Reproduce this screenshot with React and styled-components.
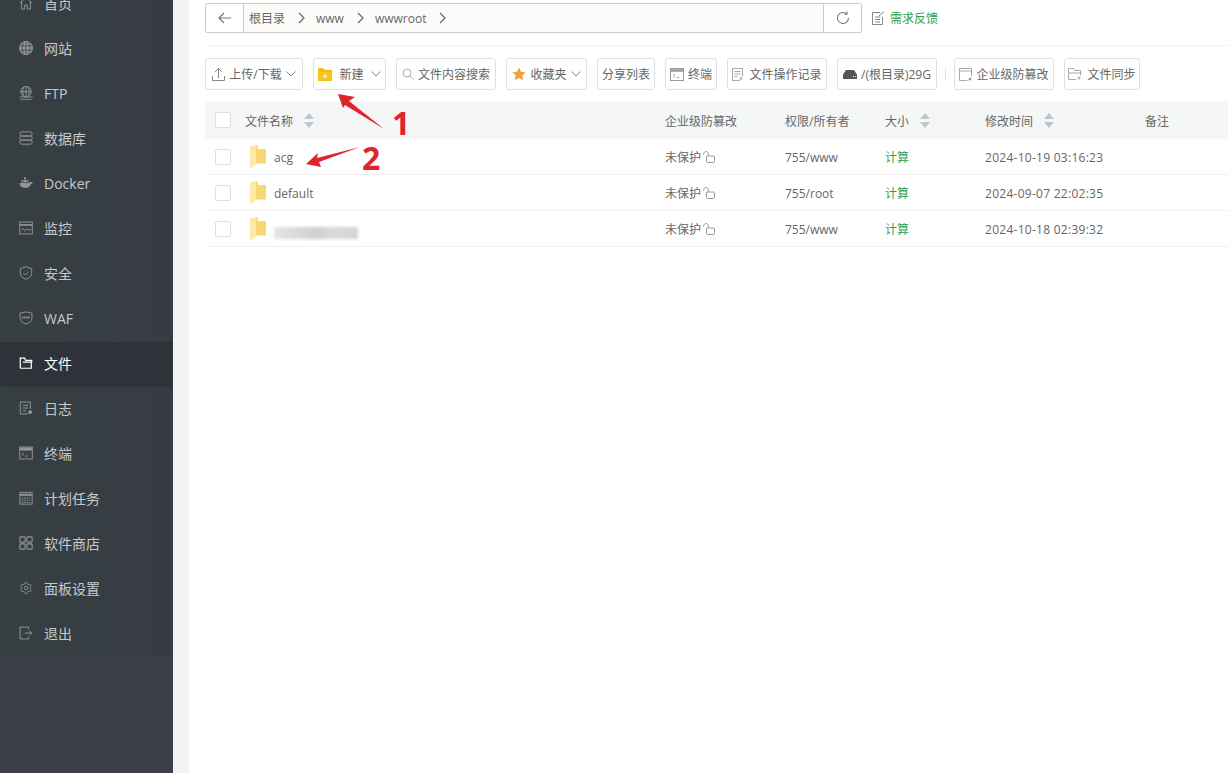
import React from "react";
import styled, { createGlobalStyle } from "styled-components";
import { Settings as GearIcon } from "lucide-react";

const Global = createGlobalStyle`
  html, body { margin: 0; height: 100%; overflow: hidden; }
  body { font-family: "Open Sans", "Noto Sans CJK SC", sans-serif; font-size: 12px; color: #666; }
`;

// layout
const Page = styled.div`
  display: flex;
  width: 1228px;
  height: 773px;
  overflow: hidden;
  background: #f1f3f5;
`;

const Sidebar = styled.nav`
  width: 173px;
  flex-shrink: 0;
  background: #3c4149;
`;

const NavList = styled.div`
  margin-top: -18px;
  background: linear-gradient(90deg, #363f42 0%, #363c43 100%);
`;

const NavItem = styled.div`
  height: 45px;
  box-sizing: border-box;
  padding: 0 0 3px 19px;
  display: flex;
  align-items: center;
  gap: 11px;
  font-size: 14px;
  color: ${(p) => (p.$active ? "#fff" : "#c6cacd")};
  background: ${(p) => (p.$active ? "#2e3339" : "transparent")};
  svg {
    width: 14px;
    height: 14px;
    flex-shrink: 0;
    color: ${(p) => (p.$active ? "#fff" : "#90969a")};
  }
`;

const Main = styled.main`
  position: relative;
  flex: 1;
  margin-left: 16px;
  padding: 3px 0 0 16px;
  background: #fff;
`;

// path bar
const TopRow = styled.div`
  display: flex;
  align-items: center;
  height: 30px;
  padding-bottom: 12px;
  border-bottom: 1px solid #f0f0f0;
`;

const PathBar = styled.div`
  width: 657px;
  height: 30px;
  display: flex;
  box-sizing: border-box;
  border: 1px solid #ccc;
  border-radius: 2px;
  background: #fbfcf9;
`;

const PathBtn = styled.div`
  width: 37px;
  flex-shrink: 0;
  display: flex;
  align-items: center;
  justify-content: center;
  background: #fff;
  color: #777;
  ${(p) => (p.$right ? "border-left: 1px solid #ccc;" : "border-right: 1px solid #ccc;")}
  svg { width: 14px; height: 14px; }
`;

const Crumbs = styled.div`
  flex: 1;
  display: flex;
  align-items: center;
  padding-left: 5px;
  color: #666;
`;

const Crumb = styled.span`
  display: flex;
  align-items: center;
  margin-right: 10px;
  svg { width: 9px; height: 12px; margin-left: 12px; color: #666; }
`;

const Feedback = styled.div`
  display: flex;
  align-items: center;
  gap: 5px;
  margin-left: 10px;
  color: #2f9e4f;
  svg { width: 13px; height: 14px; color: #888; }
`;

// toolbar
const Toolbar = styled.div`
  display: flex;
  align-items: center;
  gap: 10px;
  margin-top: 12px;
`;

const ToolBtn = styled.div`
  width: ${(p) => p.$w}px;
  height: 32px;
  flex-shrink: 0;
  box-sizing: border-box;
  display: flex;
  align-items: center;
  justify-content: center;
  gap: ${(p) => p.$gap || 4}px;
  border: 1px solid #dcdfe6;
  border-radius: 3px;
  color: #666;
  white-space: nowrap;
  svg { flex-shrink: 0; }
`;

const ToolSep = styled.div`
  width: 1px;
  height: 12px;
  background: #ddd;
  margin: 0 -2px;
`;

// table
const Table = styled.div`
  margin-top: 12px;
`;

const Row = styled.div`
  display: grid;
  grid-template-columns: 30px 420px 120px 100px 100px 160px 1fr;
  align-items: center;
  height: ${(p) => (p.$head ? 37 : 36)}px;
  box-sizing: border-box;
  padding-left: 10px;
  background: ${(p) => (p.$head ? "#f5f6f6" : "#fff")};
  border-bottom: 1px solid ${(p) => (p.$head ? "#f5f6f6" : "#f0f0f0")};
  color: #666;
`;

const Check = styled.span`
  width: 16px;
  height: 16px;
  box-sizing: border-box;
  display: block;
  border: 1px solid #dcdfe6;
  border-radius: 2px;
  background: #fff;
`;

const HeadCell = styled.div`
  display: flex;
  align-items: center;
  gap: 11px;
  span { padding-top: 2px; }
`;

const NameCell = styled.div`
  display: flex;
  align-items: center;
  gap: 8px;
  margin-left: 5px;
`;

const Latin = styled.span`
  padding-top: 2px;
  letter-spacing: ${(p) => (p.$wide ? "0.27px" : "0")};
`;

const Blurred = styled.span`
  display: block;
  width: 84px;
  height: 12px;
  margin-top: 8px;
  background: linear-gradient(90deg, #e6e6e6, #cfcfcf 50%, #dadada 70%, #d4d4d4);
  filter: blur(1.5px);
`;

const Lock = styled.span`
  display: inline-flex;
  align-items: center;
  gap: 2px;
  svg { width: 12px; height: 12px; color: #999; }
`;

const Calc = styled.span`
  color: #2f9e4f;
`;

// annotations laid over the page
const Marks = styled.svg`
  position: absolute;
  left: 0;
  top: 0;
  width: 1039px;
  height: 200px;
  pointer-events: none;
`;

const Digit = styled.span`
  position: absolute;
  left: ${(p) => p.$x}px;
  top: ${(p) => p.$y}px;
  font-family: "Noto Sans", sans-serif;
  font-size: 32px;
  line-height: 32px;
  font-weight: 700;
  color: #e0242c;
`;

const I = ({ children, fill = "none", ...rest }) => (
  <svg viewBox="0 0 16 16" fill={fill} stroke="currentColor" strokeWidth="1.1" {...rest}>
    {children}
  </svg>
);

const navItems = [
  ["首页", <I><path d="M1 8l7-6.5L15 8M3 6.500V15h3.500v-4.500h3V15H13V6.500" /></I>],
  ["网站", <I fill="currentColor"><circle cx="8" cy="8" r="7.500" /><path stroke="#363c43" strokeWidth=".8" d="M1 5.500h14M1 10.500h14M8 1v14M5 1.500c-2 4-2 9 0 13M11 1.500c2 4 2 9 0 13" /></I>],
  ["FTP", <I><circle cx="8" cy="6.500" r="6" /><path d="M2 6.500h12M8 .5v12M5.500 1.200c-1.500 3-1.500 7 0 10M10.500 1.200c1.500 3 1.500 7 0 10M.5 12.500h15M1.500 15.200h13" /></I>],
  ["数据库", <I><rect x="1" y="1" width="14" height="4.600" rx="2" /><rect x="1" y="5.800" width="14" height="4.600" rx="2" /><rect x="1" y="10.500" width="14" height="4.600" rx="2" /></I>],
  ["Docker", <I fill="currentColor" stroke="none"><path d="M.5 8h11c.5-1 1.500-1.500 2.500-1.200.800.200 1.500.600 2 1.200-.800.800-1.500 1-2.300 1-1 3-3.500 4.500-6.700 4.500-3.500 0-6-1.500-6.500-5.500z" /><path d="M3 4.500h2.200v3H3zM5.700 4.500h2.200v3H5.700zM8.400 4.500h2.200v3H8.400zM5.700 1.500h2.200v2.600H5.700z" /></I>],
  ["监控", <I><rect x=".8" y="1.200" width="14.400" height="13.600" /><path d="M.8 4.500h14.400" strokeWidth="2" /><path d="M2.500 10.500l2.500-2 2 3 2.500-3 1.500 2 3-1" /></I>],
  ["安全", <I><path d="M8 .8l6.500 2.200v5.500c0 3-2.800 5.200-6.500 6.700-3.700-1.500-6.500-3.700-6.500-6.700V3z" /><path d="M5 8l2.200 2.200L11 6.500" /></I>],
  ["WAF", <I><path d="M8 1l6.800 1.500v6c0 3-3 5-6.800 6.500-3.800-1.500-6.800-3.500-6.800-6.500v-6z" /><path strokeWidth="2.200" strokeDasharray="1.500 .6" d="M3.500 7.500h9" /></I>],
  ["文件", <I strokeWidth="1.400"><path d="M1.500 14V2.500h5l1 2.500h7v2M1.500 14h12.500V7H4.500" /></I>],
  ["日志", <I><path d="M13 9V1.200H1.500v13.600H10" /><path d="M4.500 5h6M4.500 8h6M4.500 11h3.500" /><circle cx="12.800" cy="12.800" r="1.700" fill="currentColor" /></I>],
  ["终端", <I><rect x=".8" y="1.200" width="14.400" height="13.600" /><path d="M.8 3.500h14.400" strokeWidth="3.500" /><path d="M3.500 8l2 1.500-2 1.500M7 11.500h3.500" /></I>],
  ["计划任务", <I><rect x="1" y="2" width="14" height="13" /><path d="M1 4.500h14" strokeWidth="2" /><path d="M4 .5v2M8 .5v2M12 .5v2M3 8h10M3 10.500h10M3 13h10" strokeDasharray="2 1" /></I>],
  ["软件商店", <I strokeWidth="1.300"><rect x="1" y="1" width="6" height="6" rx="1" /><rect x="9" y="1" width="6" height="6" rx="1" /><rect x="1" y="9" width="6" height="6" rx="1" /><rect x="9" y="9" width="6" height="6" rx="1" /></I>],
  ["面板设置", <GearIcon strokeWidth={1.4} />],
  ["退出", <I><path d="M11 4V1.200H1.200v13.600H11V12" /><path d="M6.500 8h8M12 5.500L14.500 8 12 10.500" /></I>],
];

const Chevron = () => (
  <svg width="10" height="6" viewBox="0 0 10 6" fill="none" stroke="#888" strokeWidth="1">
    <path d="M.5.500L5 5l4.500-4.500" />
  </svg>
);

const CrumbArrow = () => (
  <svg viewBox="0 0 9 12" fill="none" stroke="currentColor" strokeWidth="1.200">
    <path d="M2 1l5 5-5 5" />
  </svg>
);

const SortIcon = () => (
  <svg width="10" height="15" viewBox="0 0 10 15" fill="#c0c4cc">
    <path d="M5 0l5 6H0zM5 15L0 9h10z" />
  </svg>
);

const FolderIcon = () => (
  <svg width="16" height="23" viewBox="0 0 16 23">
    <path d="M0 1.500L6 0v19l-5 4-1-1z" fill="#fdeaa8" />
    <path d="M6 4h10v14.500H6z" fill="#f8d775" />
    <path d="M6 0h1.500v4H6z" fill="#f8d775" />
  </svg>
);

const OpenLock = () => (
  <svg viewBox="0 0 12 12" fill="none" stroke="currentColor" strokeWidth="1">
    <rect x="3.500" y="5" width="8" height="6.500" rx="1" />
    <path d="M.5 3.500C.5 1.500 2 .5 3 .5c1 0 2 .6 2.300 2V5" />
  </svg>
);

const tools = [
  { label: "上传/下载", w: 98, caret: true, icon: <svg width="13" height="13" viewBox="0 0 13 13" fill="none" stroke="#888"><path d="M.5 8v4.500h12V8M6.500 10V1M3 4l3.500-3.500L10 4" /></svg> },
  { label: "新建", w: 73, gap: 7, caret: true, icon: <svg width="14" height="13" viewBox="0 0 14 13"><path d="M0 0h5.500l1.500 2h7v11H0z" fill="#f5c518" /><path d="M0 2.800h14" stroke="#d9a90f" strokeWidth=".6" /><path d="M7 6v4.500M4.800 8.200h4.400" stroke="#fff" strokeWidth="1" /></svg> },
  { label: "文件内容搜索", w: 100, icon: <svg width="12" height="12" viewBox="0 0 12 12" fill="none" stroke="#aaa"><circle cx="5" cy="5" r="4" /><path d="M8 8l3.500 3.500" /></svg> },
  { label: "收藏夹", w: 81, caret: true, icon: <svg width="14" height="14" viewBox="0 0 14 14" fill="#e8a33a"><path d="M7 .5l2 4.300 4.700.6-3.400 3.200.9 4.700L7 11l-4.200 2.300.9-4.700L.3 5.400 5 4.800z" /></svg> },
  { label: "分享列表", w: 58 },
  { label: "终端", w: 52, icon: <svg width="14" height="13" viewBox="0 0 14 13" fill="none" stroke="#999"><rect x=".5" y=".5" width="13" height="12" /><path d="M.5 2.500h13" strokeWidth="2.500" /><path d="M3 6l2 1.500L3 9M6.500 9.500h3" strokeWidth=".8" /></svg> },
  { label: "文件操作记录", w: 100, gap: 6, icon: <svg width="11" height="13" viewBox="0 0 11 13" fill="none" stroke="#aaa"><path d="M10.500 8V.5H.5v12H8M2.500 3.500h6M2.500 6h6M2.500 8.500h3" /><circle cx="9" cy="10.500" r="1.300" /></svg> },
  { label: "/(根目录)29G", w: 100, gap: 4, icon: <svg width="14" height="9" viewBox="0 0 14 9" fill="#555"><path d="M3 0h8l3 4.500V9H0V4.500z" /><path d="M10 6.500h1M12 6.500h.8" stroke="#fff" /></svg> },
];

const tools2 = [
  { label: "企业级防篡改", w: 100, icon: <svg width="13" height="13" viewBox="0 0 13 13" fill="none" stroke="#aaa"><path d="M8.500 12.500h-8V.5h12v8M.5 3h12" /><circle cx="11" cy="11" r="1.500" fill="#6cbf84" stroke="none" /></svg> },
  { label: "文件同步", w: 76, gap: 5, icon: <svg width="14" height="12" viewBox="0 0 14 12" fill="none" stroke="#aaa"><path d="M8 11.500H.5V.5h5l1 2h6v5M.5 5h13" /><circle cx="11" cy="10" r="1.500" fill="#8fd0a5" stroke="none" /></svg> },
];

const renderTool = (t) => (
  <ToolBtn key={t.label} $w={t.w} $gap={t.gap}>
    {t.icon}
    <span>{t.label}</span>
    {t.caret && <Chevron />}
  </ToolBtn>
);

const files = [
  { name: "acg", perm: "755/www", time: "2024-10-19 03:16:23" },
  { name: "default", perm: "755/root", time: "2024-09-07 22:02:35" },
  { blur: true, perm: "755/www", time: "2024-10-18 02:39:32" },
];

export default function App() {
  return (
    <>
      <Global />
      <Page>
        <Sidebar>
          <NavList>
            {navItems.map(([label, icon]) => (
              <NavItem key={label} $active={label === "文件"}>
                {icon}
                <span>{label}</span>
              </NavItem>
            ))}
          </NavList>
        </Sidebar>
        <Main>
          <TopRow>
            <PathBar>
              <PathBtn>
                <svg viewBox="0 0 14 14" fill="none" stroke="currentColor" strokeWidth="1.200"><path d="M13 7H1.500M6 2L1 7l5 5" /></svg>
              </PathBtn>
              <Crumbs>
                <Crumb>根目录<CrumbArrow /></Crumb>
                <Crumb>www<CrumbArrow /></Crumb>
                <Crumb>wwwroot<CrumbArrow /></Crumb>
              </Crumbs>
              <PathBtn $right>
                <svg viewBox="0 0 14 14" fill="none" stroke="currentColor" strokeWidth="1.100"><path d="M12.500 7a5.500 5.500 0 1 1-1.700-4M11 .5V3.200H8.300" /></svg>
              </PathBtn>
            </PathBar>
            <Feedback>
              <svg viewBox="0 0 13 14" fill="none" stroke="currentColor"><path d="M8 1.500H.5v12h10V6M3 6h5M3 8.500h5M3 11h5M7 5l5-4.500" /></svg>
              需求反馈
            </Feedback>
          </TopRow>
          <Toolbar>
            {tools.map(renderTool)}
            <ToolSep />
            {tools2.map(renderTool)}
          </Toolbar>
          <Table>
            <Row $head>
              <Check />
              <HeadCell><span>文件名称</span><SortIcon /></HeadCell>
              <HeadCell><span>企业级防篡改</span></HeadCell>
              <HeadCell><span>权限/所有者</span></HeadCell>
              <HeadCell><span>大小</span><SortIcon /></HeadCell>
              <HeadCell><span>修改时间</span><SortIcon /></HeadCell>
              <HeadCell><span>备注</span></HeadCell>
            </Row>
            {files.map((f) => (
              <Row key={f.time}>
                <Check />
                <NameCell>
                  <FolderIcon />
                  {f.blur ? <Blurred /> : <Latin>{f.name}</Latin>}
                </NameCell>
                <Lock>未保护<OpenLock /></Lock>
                <Latin>{f.perm}</Latin>
                <Calc>计算</Calc>
                <Latin $wide>{f.time}</Latin>
                <span />
              </Row>
            ))}
          </Table>
          <Marks viewBox="189 0 1039 200">
            <polygon points="338,94 355,97 349,101 384,129 345,105 343,108" fill="#e0242c" />
            <polygon points="306,164 318,153 317,158 360,147 319,162 321,167" fill="#e0242c" />
          </Marks>
          <Digit $x={203} $y={107}>1</Digit>
          <Digit $x={173} $y={142}>2</Digit>
        </Main>
      </Page>
    </>
  );
}
